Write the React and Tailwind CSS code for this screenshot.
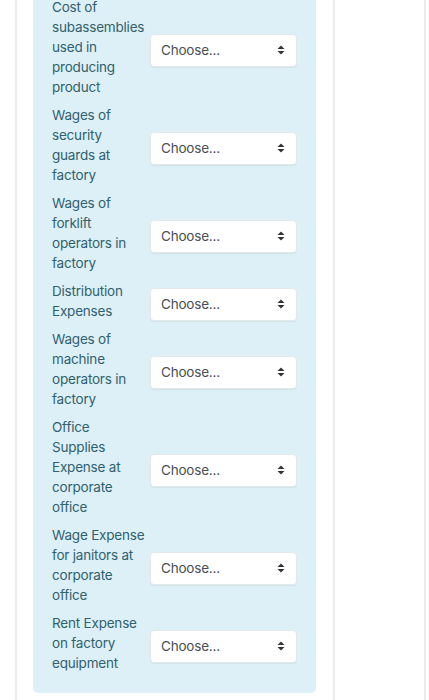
import React from "react";

const rows = [
  ["Cost of", "subassemblies", "used in", "producing", "product"],
  ["Wages of", "security", "guards at", "factory"],
  ["Wages of", "forklift", "operators in", "factory"],
  ["Distribution", "Expenses"],
  ["Wages of", "machine", "operators in", "factory"],
  ["Office", "Supplies", "Expense at", "corporate", "office"],
  ["Wage Expense", "for janitors at", "corporate", "office"],
  ["Rent Expense", "on factory", "equipment"],
];

function Arrows() {
  return (
    <svg width="8" height="10" viewBox="0 0 8 10" className="shrink-0">
      <path d="M4 0.5 L7.5 4 L0.5 4 Z" fill="#333" />
      <path d="M4 9.5 L7.5 6 L0.5 6 Z" fill="#333" />
    </svg>
  );
}

export default function App() {
  return (
    <div
      className="w-[429px] h-[700px] overflow-hidden bg-white flex"
      style={{ fontFamily: "Inter, 'Noto Sans', sans-serif" }}
    >
      <div className="ml-[15px] w-[320px] border-l-2 border-r-2 border-[#ececec] pl-[16px] pr-[17px] shrink-0">
        <div className="mt-[-22px] h-[715px] bg-[#def0f7] rounded-[5px] pl-[19px] pr-[19px] pt-[19px] flex flex-col gap-[8px]">
          {rows.map((lines, i) => (
            <div key={i} className="flex items-center">
              <div className="w-[98px] shrink-0 text-[13.5px] tracking-[-0.2px] leading-[20px] text-[#2f6170]">
                {lines.map((l, j) => (
                  <div key={j} className="whitespace-nowrap">{l}</div>
                ))}
              </div>
              <div className="mt-[6px] w-[147px] h-[33px] bg-white border border-[#e3e8ec] rounded-[4px] shadow-[0_1px_1px_rgba(0,0,0,0.06)] flex items-center justify-between pl-[10px] pr-[11px]">
                <span className="text-[13.5px] tracking-[-0.2px] text-[#4a4f55]">Choose...</span>
                <Arrows />
              </div>
            </div>
          ))}
        </div>
      </div>
      <div className="w-[91px] border-r-2 border-[#ececec] shrink-0" />
    </div>
  );
}
